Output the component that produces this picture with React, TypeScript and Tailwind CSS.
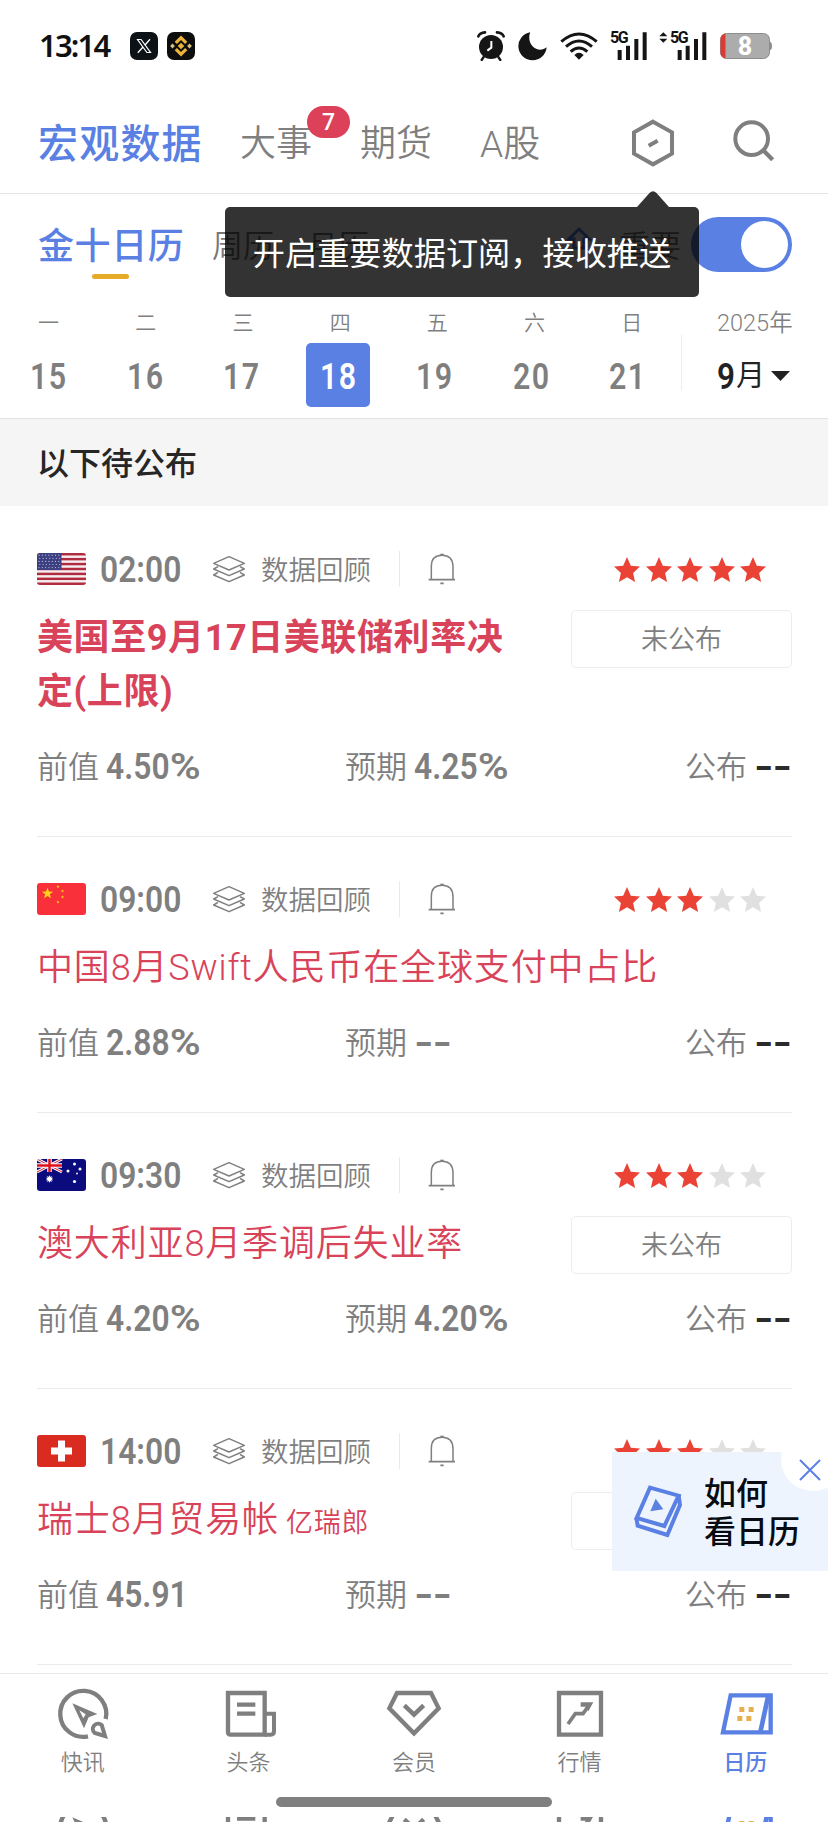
import React from "react";

const GRAY = "#7f7f7f";
const BLUE = "#5a80e3";

function Num({ children, className = "" }: { children: React.ReactNode; className?: string }) {
  return (
    <span className={`inline-block whitespace-nowrap font-['Roboto'] text-[37px] leading-none font-semibold ${className}`}>
      {children}
    </span>
  );
}

function StatusBar() {
  return (
    <div className="flex h-[92px] items-center pb-px pl-[39px] text-[#111]">
      <span className="w-[91px] whitespace-nowrap font-['Noto_Sans'] text-[31px] font-semibold leading-none tracking-[-1.8px]">13:14</span>
      <svg className="h-7 w-7" viewBox="0 0 28 28">
        <rect width="28" height="28" rx="7" fill="#0d1217" />
        <path d="M7.5 7.5h3.6l9.4 13h-3.6z" fill="none" stroke="#fff" strokeWidth="1.2" />
        <path d="M20 7.3l-5.2 5.9M12.8 15.3l-5 5.4" stroke="#fff" strokeWidth="1.3" />
      </svg>
      <svg className="ml-[9px] h-7 w-7" viewBox="0 0 28 28">
        <rect width="28" height="28" rx="7" fill="#0d0d0d" />
        <g fill="#ecb33a">
          <path d="M14 3.5l6.3 6.2-2.2 2.3L14 7.9 9.9 12l-2.2-2.3z" />
          <path d="M14 24.5l6.3-6.2-2.2-2.3-4.1 4.1L9.9 16l-2.2 2.3z" />
          <path d="M14 10.8l3.3 3.2-3.3 3.2-3.3-3.2z" />
        </g>
        <path d="M5.5 11.6l2.4 2.4-2.4 2.4L3.1 14zM22.5 11.6l2.4 2.4-2.4 2.4-2.4-2.4z" fill="#d8c07a" />
      </svg>
      <svg className="ml-[282px] h-[30px] w-7" viewBox="189 91 84 90">
        <circle cx="231" cy="139" r="36" fill="#151515" />
        <path d="M193 107q4-11 20-12M269 107q-4-11-20-12" stroke="#151515" strokeWidth="8" strokeLinecap="round" fill="none" />
        <path d="M209 169l-6 9M253 169l6 9" stroke="#151515" strokeWidth="7" strokeLinecap="round" />
        <path d="M232 121v20l-12 9" stroke="#fff" strokeWidth="6" fill="none" />
      </svg>
      <svg className="ml-[13px] h-[30px] w-[29px]" viewBox="312 91 88 90">
        <path d="M349 94a43 43 0 1 0 50 46c-25 21-64-6-50-46z" fill="#151515" />
      </svg>
      <svg className="ml-[13px] h-[30px] w-[38px]" viewBox="438 90 114 90">
        <g fill="none" stroke="#151515" strokeWidth="9">
          <path d="M442 122q53-46 106 0" />
          <path d="M456 137q39-34 78 0" />
          <path d="M470 152q25-22 50 0" />
        </g>
        <path d="M481 162q14-13 28 0l-14 14z" fill="#151515" />
      </svg>
      <div className="relative ml-3 h-[30px] w-[38px]">
        <span className="absolute left-0 top-[-1px] font-['Roboto'] text-[16px] font-bold leading-none tracking-[-1.5px]">5G</span>
        <svg className="absolute inset-0 h-[30px] w-[38px]" viewBox="586 91 114 90">
          <path d="M609 148h12v30h-12zM634 135h12v43h-12zM659 115h12v63h-12zM684 95h12v83h-12z" fill="#151515" />
        </svg>
      </div>
      <div className="relative ml-[11px] h-[30px] w-[49px]">
        <span className="absolute left-[11px] top-[-1px] font-['Roboto'] text-[16px] font-bold leading-none tracking-[-1.5px]">5G</span>
        <svg className="absolute inset-0 h-[30px] w-[49px]" viewBox="733 91 147 90">
          <path d="M789 148h12v30h-12zM813 135h12v43h-12zM838 115h12v63h-12zM863 95h12v83h-12z" fill="#151515" />
          <path d="M734 107l12-12 12 12zM734 114l12 12 12-12z" fill="#151515" />
        </svg>
      </div>
      <div className="relative ml-[12px] flex h-[28px] w-[52px] items-center justify-center">
        <svg className="absolute inset-0 h-[28px] w-[52px]" viewBox="0 0 52 28">
          <rect x=".5" y="1.5" width="49" height="25" rx="6" fill="#acacac" stroke="#8d8d8d" />
          <path d="M50 10q2 0 2 4t-2 4z" fill="#8d8d8d" />
          <path d="M5.5 1.5V26.500Q.5 25.500 .5 20.500V7.500Q.5 2.500 5.500 1.500z" fill="#dc3b35" />
        </svg>
        <span className="relative -ml-0.5 mt-[2px] font-['Roboto'] text-[25px] font-extrabold leading-none text-white">8</span>
      </div>
    </div>
  );
}

function TopTabs() {
  return (
    <div className="flex h-[102px] items-center border-b border-[#e5e5e5] pl-[38px] leading-none text-[#7f7f7f]">
      <span className="w-[202px] pt-1 text-[40px] font-medium tracking-[1.2px] text-[#5a80e3]">宏观数据</span>
      <span className="relative w-[120px] pt-[3px] text-[36px] font-[350]">
        大事
        <span className="absolute left-[67px] top-[-17px] flex h-8 w-[43px] items-center justify-center rounded-full bg-[#dc4159] font-['Roboto'] text-[23px] font-medium text-white">7</span>
      </span>
      <span className="w-[119px] pt-[3px] text-[36px] font-[350]">期货</span>
      <span className="w-[152px] whitespace-nowrap pl-px pt-[3px] text-[37px] font-[350]">A股</span>
      <svg className="h-12 w-[44px]" viewBox="651 355 132 144">
        <path d="M717 363l57 32v64l-57 32-57-32v-64z" fill="none" stroke={GRAY} strokeWidth="12" />
        <path d="M704 435l27-15" stroke={GRAY} strokeWidth="12" />
      </svg>
      <svg className="-mt-1 ml-[57px] h-[44px] w-[44px]" viewBox="955 355 132 132">
        <circle cx="1014" cy="414" r="49" fill="none" stroke={GRAY} strokeWidth="12" />
        <path d="M1047 447l30 30" stroke={GRAY} strokeWidth="13" />
      </svg>
    </div>
  );
}

function CalendarTabs() {
  return (
    <div className="relative flex h-[112px] pt-[21px] leading-none">
      <div className="flex w-[175px] flex-col pl-[38px]">
        <span className="mt-[14px] whitespace-nowrap text-[36px] font-medium tracking-[0.6px] text-[#5a80e3]">金十日历</span>
        <span className="ml-[54px] mt-[9px] h-[5px] w-[37px] rounded-sm bg-[#e5ab27]" />
      </div>
      <span className="ml-[37px] mt-[16px] whitespace-nowrap text-[31px] font-[350] text-[#777]">周历</span>
      <span className="ml-[33px] mt-[16px] whitespace-nowrap text-[31px] font-[350] text-[#777]">月历</span>
      <svg className="ml-[195px] mt-[9px] h-7 w-[30px]" viewBox="0 0 30 28">
        <path d="M15 5L25 15H20V24H10V15H5z" fill="none" stroke="#5a80e3" strokeWidth="3" />
      </svg>
      <span className="ml-[25px] mt-[16px] whitespace-nowrap text-[31px] font-[350] text-[#777]">重要</span>
      <div className="ml-auto mr-[36px] mt-[2px] flex h-[55px] w-[101px] items-center justify-end rounded-full bg-[#5a80e3] pr-[4px]">
        <span className="h-[47px] w-[47px] rounded-full bg-white" />
      </div>
      <div className="absolute left-[225px] top-[13px] flex h-[90px] w-[474px] items-center justify-center rounded-[5px] bg-black/80 text-[32.200px] text-white">
        <span className="mt-[5px] whitespace-nowrap">开启重要数据订阅，接收推送</span>
        <svg className="absolute bottom-full left-[412px] h-4 w-8" viewBox="0 0 32 16">
          <path d="M0 16L12.500 2Q16-1.500 19.500 2L32 16z" fill="rgba(0,0,0,.8)" />
        </svg>
      </div>
    </div>
  );
}

const weekdays = ["一", "二", "三", "四", "五", "六", "日"];
const dates = [15, 16, 17, 18, 19, 20, 21];

function WeekStrip() {
  return (
    <div className="flex h-[113px] border-b border-[#e2e2e2] leading-none text-[#7f7f7f]">
      <div className="w-[681px]">
        <div className="flex pt-[7px] text-[21px] font-[350]">
          {weekdays.map((w) => (
            <span key={w} className="w-[97.200px] text-center">
              {w}
            </span>
          ))}
        </div>
        <div className="flex pt-[9px]">
          {dates.map((d) => (
            <div key={d} className="flex w-[96.500px] justify-center">
              <span className={`flex h-16 w-16 items-center justify-center rounded-[5px] pt-[2px] ${d === 18 ? "bg-[#5a80e3] text-white" : ""}`}>
                <Num className="-mr-px scale-x-[0.82] tracking-[1.5px]">{d}</Num>
              </span>
            </div>
          ))}
        </div>
      </div>
      <span className="mt-[29px] h-[56px] w-px bg-[#ededed]" />
      <div className="flex flex-col pl-[35px]">
        <span className="mt-[6px] whitespace-nowrap text-[23.500px] font-[350]">2025年</span>
        <span className="mt-[22px] flex items-center text-[#222]">
          <Num className="w-[19px] origin-left scale-x-[0.85]">9</Num>
          <span className="text-[29px] leading-[37px]">月</span>
          <svg className="ml-[6px] h-[10px] w-[19px]" viewBox="0 0 19 10">
            <path d="M0 0h19l-9.500 10z" fill="#222" />
          </svg>
        </span>
      </div>
    </div>
  );
}

const STAR = "M13 0l3.800 8.700 9.200.9-6.900 6.300 2 9.100-8.100-4.800L4.900 25l2-9.100L0 9.600l9.200-.9z";

function Stars({ n }: { n: number }) {
  return (
    <div className="flex gap-[5.500px]">
      {[0, 1, 2, 3, 4].map((i) => (
        <svg key={i} className="h-[25px] w-[26px]" viewBox="0 0 26 25">
          <path d={STAR} fill={i < n ? "#eb4236" : "#e0e0e0"} />
        </svg>
      ))}
    </div>
  );
}

function star5(cx: number, cy: number, r: number, rot = -90) {
  return Array.from({ length: 10 }, (_, i) => {
    const a = ((rot + i * 36) * Math.PI) / 180;
    const q = i % 2 ? r * 0.4 : r;
    return `${(cx + q * Math.cos(a)).toFixed(2)},${(cy + q * Math.sin(a)).toFixed(2)}`;
  }).join(" ");
}

function Flag({ code }: { code: string }) {
  return (
    <svg className="h-8 w-[49px] rounded-[3px]" viewBox="0 0 49 32">
      {code === "us" && (
        <>
          <rect width="49" height="32" fill="#f5eef0" />
          {[0, 1, 2, 3, 4, 5, 6].map((i) => (
            <rect key={i} y={i * 4.92} width="49" height="2.46" fill="#b02a40" />
          ))}
          <rect width="24.500" height="17" fill="#3c3f80" />
          {Array.from({ length: 35 }, (_, i) => (
            <circle key={i} cx={2 + (i % 7) * 3.3 + (Math.floor(i / 7) % 2) * 0.8} cy={2.2 + Math.floor(i / 7) * 3.1} r=".6" fill="#c0c2e0" />
          ))}
        </>
      )}
      {code === "cn" && (
        <>
          <rect width="49" height="32" fill="#f9303a" />
          <g fill="#fbd316">
            <polygon points={star5(10.5, 10.5, 6)} />
            <polygon points={star5(21, 3.5, 1.8)} />
            <polygon points={star5(25.5, 8, 1.8)} />
            <polygon points={star5(25.5, 14, 1.8)} />
            <polygon points={star5(21, 19, 1.8)} />
          </g>
        </>
      )}
      {code === "au" && (
        <>
          <rect width="49" height="32" fill="#0b0b7e" />
          <path d="M0 0L25 13M25 0L0 13" stroke="#fff" strokeWidth="3" />
          <path d="M0 0L25 13M25 0L0 13" stroke="#e0202c" strokeWidth="1" />
          <path d="M12.500 0V13M0 6.500H25" stroke="#fff" strokeWidth="4.500" />
          <path d="M12.500 0V13M0 6.500H25" stroke="#e0101c" strokeWidth="2.500" />
          <g fill="#fff">
            <polygon points={star5(12.5, 20, 4)} />
            <polygon points={star5(12.5, 20, 4, 90)} />
            <circle cx="37.500" cy="5" r="1.500" />
            <circle cx="31" cy="12" r="1.500" />
            <circle cx="43" cy="10" r="1.500" />
            <circle cx="40" cy="14.500" r=".9" />
            <circle cx="37.500" cy="22.500" r="1.600" />
          </g>
        </>
      )}
      {code === "ch" && (
        <>
          <rect width="49" height="32" fill="#d92b20" />
          <path d="M21 5.500h7v7h7v7h-7v7h-7v-7h-7v-7h7z" fill="#fff" />
        </>
      )}
    </svg>
  );
}

type Item = {
  flag: string;
  time: string;
  title: string;
  unit?: string;
  bold?: boolean;
  stars: number;
  box?: boolean;
  prev: string;
  exp: string;
};

const items: Item[] = [
  { flag: "us", time: "02:00", title: "美国至9月17日美联储利率决定(上限)", bold: true, stars: 5, box: true, prev: "4.50%", exp: "4.25%" },
  { flag: "cn", time: "09:00", title: "中国8月Swift人民币在全球支付中占比", stars: 3, prev: "2.88%", exp: "--" },
  { flag: "au", time: "09:30", title: "澳大利亚8月季调后失业率", stars: 3, box: true, prev: "4.20%", exp: "4.20%" },
  { flag: "ch", time: "14:00", title: "瑞士8月贸易帐", unit: "亿瑞郎", stars: 3, box: true, prev: "45.91", exp: "--" },
];

function Dashes({ className }: { className: string }) {
  return <span className={`inline-block origin-left scale-x-[1.360] whitespace-nowrap font-['Roboto'] text-[37px] font-bold leading-none tracking-[-1px] ${className}`}>--</span>;
}

function Value({ text, className }: { text: string; className: string }) {
  const pct = text.endsWith("%");
  return (
    <Num className={`origin-left scale-x-[0.860] ${className}`}>
      {pct ? text.slice(0, -1) : text}
      {pct && <span className="inline-block origin-left scale-x-[1.320]">%</span>}
    </Num>
  );
}

function EventRow({ item }: { item: Item }) {
  return (
    <div className="ml-[37px] mr-[36px] border-b border-[#ebebeb] pt-[46px] leading-none text-[#7f7f7f]">
      <div className="flex h-8 items-center">
        <Flag code={item.flag} />
        <Num className="ml-[14px] mt-px w-[95px] origin-left scale-x-[0.860]">{item.time}</Num>
        <svg className="ml-[16px] h-[28px] w-[36px]" viewBox="632 104 108 84">
          <g fill="none" stroke={GRAY} strokeWidth="4.500" strokeLinejoin="round">
            <path d="M686 109l46 20-46 20-46-20z" />
            <path d="M653 139l-13 7 46 20 46-20-13-7" />
            <path d="M653 156l-13 8 46 20 46-20-13-8" />
          </g>
        </svg>
        <span className="ml-[14px] mt-[3px] whitespace-nowrap text-[27.500px] font-[350]">数据回顾</span>
        <span className="ml-[28px] h-9 w-px bg-[#eaeaea]" />
        <svg className="ml-[28px] h-[32px] w-[28px]" viewBox="39 98 84 96">
          <path d="M49 178v-40q0-33 32-33t33 33v40" fill="none" stroke={GRAY} strokeWidth="4.500" />
          <path d="M41 178h79M76 189h10" stroke={GRAY} strokeWidth="5" />
          <path d="M76 103h10" stroke={GRAY} strokeWidth="6" />
        </svg>
        <div className="ml-auto mr-[26px]">
          <Stars n={item.stars} />
        </div>
      </div>
      <div className="mt-[26px] flex items-start justify-between">
        <div
          className={`text-[36px] leading-[54px] text-[#d8435a] ${item.bold ? "h-[108px] font-bold tracking-[0.600px]" : "h-[54px] font-[350] tracking-[0.850px]"} ${item.box ? "w-[480px]" : "whitespace-nowrap"}`}
        >
          {item.title}
          {item.unit && <span className="ml-[7px] text-[27px] leading-none">{item.unit}</span>}
        </div>
        {item.box && (
          <div className="-mb-[3px] -mt-px flex h-[58px] w-[221px] items-center justify-center rounded-[5px] border border-[#ececec] pt-[3px] text-[27px] font-[350]">
            未公布
          </div>
        )}
      </div>
      <div className="flex h-[117px] items-center pb-[22px] text-[31px] font-[350]">
        <span className="w-[69px] pt-px">前值</span>
        <Value text={item.prev} className="w-[239px]" />
        <span className="w-[69px] pt-px">预期</span>
        {item.exp === "--" ? <Dashes className="w-[219px]" /> : <Value text={item.exp} className="w-[219px]" />}
        <span className="ml-auto pt-px">公布</span>
        <Dashes className="ml-[7px] w-[38px] text-[#2b2b2b]" />
      </div>
    </div>
  );
}

function HelpCard() {
  return (
    <div className="absolute right-0 top-[1452px] flex h-[119px] w-[216px] items-center overflow-hidden bg-[#eef4fe]">
      <svg className="ml-[21px] h-[55px] w-[50px]" viewBox="657 222 150 165">
        <g fill="none" stroke={BLUE} strokeWidth="12">
          <path d="M708 233L794 257 751 348 668 324z" />
          <path d="M667 324L671 347 760 375 798 285 794 257" />
        </g>
        <path d="M725 266l23 32-39 6z" fill={BLUE} />
      </svg>
      <div className="ml-[21px] mt-[3px] whitespace-nowrap text-[32px] font-medium leading-[38px] text-[#080c12]">
        如何
        <br />
        看日历
      </div>
      <svg className="absolute right-0 top-0 h-10 w-[50px]" viewBox="0 0 50 40">
        <circle cx="35" cy="7" r="32" fill="#fff" />
        <path d="M22 8l20 20M42 8L22 28" stroke={BLUE} strokeWidth="2" />
      </svg>
    </div>
  );
}

const navItems = ["快讯", "头条", "会员", "行情", "日历"];

function NavIcon({ i }: { i: number }) {
  const s = { fill: "none", stroke: GRAY, strokeWidth: 13 };
  const cls = "h-[56px] w-[56px] shrink-0";
  if (i === 0)
    return (
      <svg className={cls} viewBox="165 78 168 168">
        <path d="M317 177A69 69 0 1 0 264 229" {...s} />
        <path d="M217 130L292 162 266 172 252 205z" fill={GRAY} />
        <path d="M238 151L257 163 250 175z" fill="#fff" />
        <path d="M315 228L284 219A15.500 15.500 0 1 1 305 195z" {...s} strokeWidth="12" />
      </svg>
    );
  if (i === 1)
    return (
      <svg className={cls} viewBox="660 78 168 168">
        <path d="M684 99H794V224H692Q684 224 684 216z" {...s} />
        <path d="M794 161H822V214Q822 224 812 224H794" {...s} strokeWidth="12" />
        <path d="M711 134h55M711 161h55" {...s} />
      </svg>
    );
  if (i === 2)
    return (
      <svg className={cls} viewBox="1158 78 168 168">
        <path d="M1191 99H1293L1316 145 1242 220 1168 145z" {...s} />
        <path d="M1213 136l29 28 29-28" {...s} />
      </svg>
    );
  if (i === 3)
    return (
      <svg className={cls} viewBox="413 78 168 168">
        <path d="M434 99H560V224H434z" {...s} />
        <path d="M461 192l22-31h23l18-25" {...s} strokeWidth="11" />
        <path d="M499 127h38l-15 27-8-14h-15z" fill={GRAY} />
      </svg>
    );
  return (
    <svg className={cls} viewBox="909 78 168 168">
      <path d="M950 106H1070V217H927z" fill="none" stroke={BLUE} strokeWidth="13" />
      <path d="M1063 106L1039 217" stroke={BLUE} strokeWidth="14" />
      <path d="M976 141h15v15h-15zM1004 141h15v15h-15zM970 168h15v15h-15zM997 168h15v15h-15z" fill="#e6b04e" />
    </svg>
  );
}

function BottomNav() {
  return (
    <div className="relative h-[149px] shrink-0 overflow-hidden border-t border-[#e8e8e8] bg-white leading-none">
      <div className="flex h-[143px]">
        {navItems.map((t, i) => (
          <div key={t} className="flex w-1/5 flex-col items-center pt-[12px]">
            <NavIcon i={i} />
            <span className={`mt-[10px] text-[22px] ${i === 4 ? "font-medium text-[#5a80e3]" : "font-[350] text-[#7f7f7f]"}`}>{t}</span>
          </div>
        ))}
      </div>
      <div className="flex h-[6px] overflow-hidden">
        {navItems.map((t, i) => (
          <div key={t} className="-mt-[17px] flex w-1/5 justify-center">
            <NavIcon i={i} />
          </div>
        ))}
      </div>
      <span className="absolute left-[276px] top-[123px] h-[10px] w-[276px] rounded-full bg-[#808080]" />
    </div>
  );
}

export default function App() {
  return (
    <div className="relative flex h-[1822px] w-[828px] flex-col overflow-hidden bg-white font-['Roboto','Noto_Sans_CJK_SC',sans-serif]">
      <StatusBar />
      <TopTabs />
      <CalendarTabs />
      <WeekStrip />
      <div className="flex h-[87px] shrink-0 items-center bg-[#f5f5f5] pl-[37px] pt-[2px] text-[32px] font-medium text-[#262626]">以下待公布</div>
      <div className="min-h-0 flex-1 overflow-hidden pt-px">
        {items.map((it) => (
          <EventRow key={it.time} item={it} />
        ))}
      </div>
      <HelpCard />
      <BottomNav />
    </div>
  );
}
